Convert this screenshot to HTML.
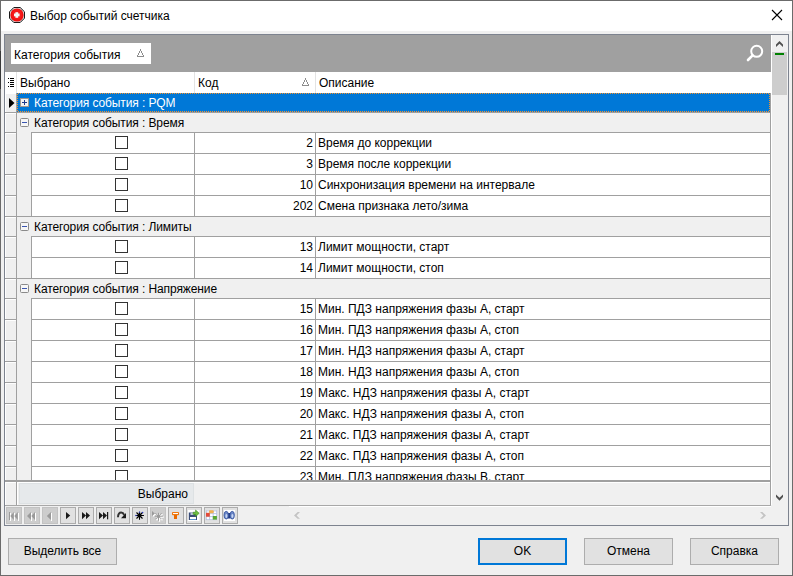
<!DOCTYPE html>
<html><head><meta charset="utf-8"><style>
html,body{margin:0;padding:0;width:793px;height:576px;overflow:hidden;background:#f0f0f0}
.t{position:absolute;font-family:"Liberation Sans", sans-serif;font-size:12px;line-height:14px;white-space:nowrap;color:#000}
</style></head><body>
<div style="position:absolute;left:0px;top:0px;width:793px;height:576px;background:#f0f0f0"></div>
<div style="position:absolute;left:1px;top:1px;width:791px;height:30px;background:#fff"></div>
<div style="position:absolute;left:0px;top:0px;width:793px;height:1px;background:#6b6b6b"></div>
<div style="position:absolute;left:0px;top:575px;width:793px;height:1px;background:#6b6b6b"></div>
<div style="position:absolute;left:0px;top:0px;width:1px;height:576px;background:#6b6b6b"></div>
<div style="position:absolute;left:792px;top:0px;width:1px;height:576px;background:#6b6b6b"></div>
<div style="position:absolute;left:0px;top:51px;width:1px;height:38px;background:#383838"></div>
<svg style="position:absolute;left:9px;top:7px" width="16" height="16" viewBox="0 0 16 16">
<polygon points="4.8,0.5 11.2,0.5 15.5,4.8 15.5,11.2 11.2,15.5 4.8,15.5 0.5,11.2 0.5,4.8" fill="#d8d8d8" stroke="#1a1a1a" stroke-width="1"/>
<circle cx="8" cy="8" r="6.6" fill="#f01010"/>
<circle cx="8" cy="7.6" r="5" fill="#f41a1a"/>
<rect x="5" y="6.5" width="5.6" height="2.8" fill="#f4f8f8"/><rect x="6.4" y="5.2" width="2.8" height="5.6" fill="#f4f8f8"/>
</svg>
<div class="t" style="left:30px;top:9px;">Выбор событий счетчика</div>
<svg style="position:absolute;left:771px;top:9px" width="12" height="12" viewBox="0 0 12 12"><path d="M1 1L11 11M11 1L1 11" stroke="#000" stroke-width="1.1"/></svg>
<div style="position:absolute;left:4px;top:34px;width:785px;height:492px;box-sizing:border-box;border:1px solid #7d838f;background:#f0f0f0"></div>
<div style="position:absolute;left:5px;top:35px;width:766px;height:37px;background:#a0a0a0"></div>
<div style="position:absolute;left:11px;top:43px;width:140px;height:21px;background:#fff"></div>
<div class="t" style="left:14px;top:48px;">Категория события</div>
<svg style="position:absolute;left:137px;top:49px" width="7" height="8" viewBox="0 0 7 8" shape-rendering="crispEdges" fill="#8c8c8c"><rect x="3" y="0" width="1" height="2"/><rect x="2" y="2" width="1" height="2"/><rect x="4" y="2" width="1" height="2"/><rect x="1" y="4" width="1" height="2"/><rect x="5" y="4" width="1" height="2"/><rect x="0" y="6" width="1" height="1"/><rect x="6" y="6" width="1" height="1"/><rect x="0" y="7" width="7" height="1"/></svg>
<svg style="position:absolute;left:740px;top:38px" width="30" height="30" viewBox="0 0 30 30"><circle cx="16.7" cy="13.3" r="5.5" fill="none" stroke="#fff" stroke-width="2"/><path d="M12.6 17.4L8 22" stroke="#fff" stroke-width="2.6" stroke-linecap="round"/></svg>
<div style="position:absolute;left:771px;top:35px;width:1px;height:470px;background:#fff"></div>
<div style="position:absolute;left:772px;top:35px;width:16px;height:470px;background:#f0f0f0"></div>
<svg style="position:absolute;left:772px;top:38px" width="16" height="12" viewBox="0 0 16 12"><polygon points="4,6.6 7.5,2.9 11,6.6 11,9 7.5,5.8 4,9" fill="#505050"/></svg>
<div style="position:absolute;left:772px;top:52px;width:15px;height:43px;background:#cdcdcd"></div>
<div style="position:absolute;left:775px;top:53px;width:9px;height:2px;background:#008000"></div>
<svg style="position:absolute;left:772px;top:492px" width="16" height="12" viewBox="0 0 16 12"><polygon points="4,2.6 7.5,5.8 11,2.6 11,5 7.5,8.8 4,5" fill="#505050"/></svg>
<div style="position:absolute;left:5px;top:72px;width:766px;height:21px;background:#fff"></div>
<div style="position:absolute;left:16px;top:72px;width:1px;height:21px;background:#e3e3e3"></div>
<div style="position:absolute;left:194px;top:72px;width:1px;height:21px;background:#e3e3e3"></div>
<div style="position:absolute;left:315px;top:72px;width:1px;height:21px;background:#e3e3e3"></div>
<svg style="position:absolute;left:7px;top:77px" width="8" height="11" viewBox="0 0 8 11"><rect x="1" y="1" width="1" height="1" fill="#000"/><rect x="3" y="1" width="4" height="1" fill="#000"/><rect x="1" y="5" width="1" height="1" fill="#000"/><rect x="3" y="5" width="4" height="1" fill="#000"/><rect x="1" y="9" width="1" height="1" fill="#000"/><rect x="3" y="9" width="4" height="1" fill="#000"/><rect x="3" y="3" width="4" height="1" fill="#000"/><rect x="3" y="7" width="4" height="1" fill="#000"/></svg>
<div class="t" style="left:20px;top:76px;">Выбрано</div>
<div class="t" style="left:198px;top:76px;">Код</div>
<div class="t" style="left:319px;top:76px;">Описание</div>
<svg style="position:absolute;left:302px;top:78px" width="7" height="8" viewBox="0 0 7 8" shape-rendering="crispEdges" fill="#8c8c8c"><rect x="3" y="0" width="1" height="2"/><rect x="2" y="2" width="1" height="2"/><rect x="4" y="2" width="1" height="2"/><rect x="1" y="4" width="1" height="2"/><rect x="5" y="4" width="1" height="2"/><rect x="0" y="6" width="1" height="1"/><rect x="6" y="6" width="1" height="1"/><rect x="0" y="7" width="7" height="1"/></svg>
<div style="position:absolute;left:5px;top:93px;width:766px;height:387px;overflow:hidden">
<div style="position:absolute;left:0px;top:0px;width:11px;height:19px;background:#f0f0f0;box-shadow:inset 1px 1px 0 #fff"></div>
<div style="position:absolute;left:12px;top:0px;width:753px;height:19px;background:#0078d7"></div>
<div style="position:absolute;left:765px;top:0px;width:1px;height:20px;background:#a0a0a0"></div>
<div style="position:absolute;left:12px;top:0px;width:753px;height:1px;background:repeating-linear-gradient(90deg,transparent 0 1px,#f7922a 1px 2px)"></div>
<div style="position:absolute;left:12px;top:18px;width:753px;height:1px;background:repeating-linear-gradient(90deg,transparent 0 1px,#f7922a 1px 2px)"></div>
<div style="position:absolute;left:12px;top:0px;width:1px;height:19px;background:repeating-linear-gradient(180deg,transparent 0 1px,#f7922a 1px 2px)"></div>
<div style="position:absolute;left:764px;top:0px;width:1px;height:19px;background:repeating-linear-gradient(180deg,transparent 0 1px,#f7922a 1px 2px)"></div>
<svg style="position:absolute;left:4px;top:5px" width="6" height="10" viewBox="0 0 6 10"><path d="M0 0L5.5 5L0 10Z" fill="#000"/></svg>
<svg style="position:absolute;left:15px;top:5px" width="9" height="9" viewBox="0 0 9 9"><rect x="0.5" y="0.5" width="8" height="8" fill="#f4f4f4" stroke="#a09890"/><path d="M2 4.5H7M4.5 2V7" stroke="#1e3c8c" stroke-width="1"/></svg>
<div class="t" style="left:29px;top:3px;color:#fff;letter-spacing:-0.1px">Категория события : PQM</div>
<div style="position:absolute;left:0px;top:19px;width:765px;height:1px;background:#a0a0a0"></div>
<div style="position:absolute;left:11px;top:0px;width:1px;height:20px;background:#a0a0a0"></div>
<div style="position:absolute;left:0px;top:20px;width:11px;height:19px;background:#f0f0f0;box-shadow:inset 1px 1px 0 #fff"></div>
<div style="position:absolute;left:12px;top:20px;width:753px;height:19px;background:#f0f0f0"></div>
<div style="position:absolute;left:765px;top:20px;width:1px;height:20px;background:#a0a0a0"></div>
<svg style="position:absolute;left:15px;top:25px" width="9" height="9" viewBox="0 0 9 9"><rect x="0.5" y="0.5" width="8" height="8" rx="1" fill="#f6f6f6" stroke="#8a8a8a"/><path d="M2 4.5H7" stroke="#3a55b0" stroke-width="1"/></svg>
<div class="t" style="left:29px;top:23px;letter-spacing:-0.1px">Категория события : Время</div>
<div style="position:absolute;left:0px;top:39px;width:11px;height:1px;background:#a0a0a0"></div>
<div style="position:absolute;left:26px;top:39px;width:740px;height:1px;background:#a0a0a0"></div>
<div style="position:absolute;left:12px;top:39px;width:14px;height:1px;background:#f0f0f0"></div>
<div style="position:absolute;left:11px;top:20px;width:1px;height:20px;background:#a0a0a0"></div>
<div style="position:absolute;left:0px;top:40px;width:11px;height:20px;background:#f0f0f0;box-shadow:inset 1px 1px 0 #fff"></div>
<div style="position:absolute;left:11px;top:40px;width:1px;height:20px;background:#a0a0a0"></div>
<div style="position:absolute;left:12px;top:40px;width:14px;height:20px;background:#f0f0f0"></div>
<div style="position:absolute;left:26px;top:40px;width:740px;height:20px;background:#fff"></div>
<div style="position:absolute;left:26px;top:40px;width:1px;height:20px;background:#a0a0a0"></div>
<div style="position:absolute;left:189px;top:40px;width:1px;height:20px;background:#a0a0a0"></div>
<div style="position:absolute;left:310px;top:40px;width:1px;height:20px;background:#a0a0a0"></div>
<div style="position:absolute;left:765px;top:40px;width:1px;height:20px;background:#a0a0a0"></div>
<div style="position:absolute;left:110px;top:43px;width:13px;height:13px;box-sizing:border-box;border:1px solid #333;background:#fff"></div>
<div class="t" style="right:458px;top:43px;">2</div>
<div class="t" style="left:313px;top:43px;">Время до коррекции</div>
<div style="position:absolute;left:0px;top:60px;width:11px;height:1px;background:#a0a0a0"></div>
<div style="position:absolute;left:11px;top:60px;width:1px;height:1px;background:#a0a0a0"></div>
<div style="position:absolute;left:26px;top:60px;width:740px;height:1px;background:#a0a0a0"></div>
<div style="position:absolute;left:0px;top:61px;width:11px;height:20px;background:#f0f0f0;box-shadow:inset 1px 1px 0 #fff"></div>
<div style="position:absolute;left:11px;top:61px;width:1px;height:20px;background:#a0a0a0"></div>
<div style="position:absolute;left:12px;top:61px;width:14px;height:20px;background:#f0f0f0"></div>
<div style="position:absolute;left:26px;top:61px;width:740px;height:20px;background:#fff"></div>
<div style="position:absolute;left:26px;top:61px;width:1px;height:20px;background:#a0a0a0"></div>
<div style="position:absolute;left:189px;top:61px;width:1px;height:20px;background:#a0a0a0"></div>
<div style="position:absolute;left:310px;top:61px;width:1px;height:20px;background:#a0a0a0"></div>
<div style="position:absolute;left:765px;top:61px;width:1px;height:20px;background:#a0a0a0"></div>
<div style="position:absolute;left:110px;top:64px;width:13px;height:13px;box-sizing:border-box;border:1px solid #333;background:#fff"></div>
<div class="t" style="right:458px;top:64px;">3</div>
<div class="t" style="left:313px;top:64px;">Время после коррекции</div>
<div style="position:absolute;left:0px;top:81px;width:11px;height:1px;background:#a0a0a0"></div>
<div style="position:absolute;left:11px;top:81px;width:1px;height:1px;background:#a0a0a0"></div>
<div style="position:absolute;left:26px;top:81px;width:740px;height:1px;background:#a0a0a0"></div>
<div style="position:absolute;left:0px;top:82px;width:11px;height:20px;background:#f0f0f0;box-shadow:inset 1px 1px 0 #fff"></div>
<div style="position:absolute;left:11px;top:82px;width:1px;height:20px;background:#a0a0a0"></div>
<div style="position:absolute;left:12px;top:82px;width:14px;height:20px;background:#f0f0f0"></div>
<div style="position:absolute;left:26px;top:82px;width:740px;height:20px;background:#fff"></div>
<div style="position:absolute;left:26px;top:82px;width:1px;height:20px;background:#a0a0a0"></div>
<div style="position:absolute;left:189px;top:82px;width:1px;height:20px;background:#a0a0a0"></div>
<div style="position:absolute;left:310px;top:82px;width:1px;height:20px;background:#a0a0a0"></div>
<div style="position:absolute;left:765px;top:82px;width:1px;height:20px;background:#a0a0a0"></div>
<div style="position:absolute;left:110px;top:85px;width:13px;height:13px;box-sizing:border-box;border:1px solid #333;background:#fff"></div>
<div class="t" style="right:458px;top:85px;">10</div>
<div class="t" style="left:313px;top:85px;">Синхронизация времени на интервале</div>
<div style="position:absolute;left:0px;top:102px;width:11px;height:1px;background:#a0a0a0"></div>
<div style="position:absolute;left:11px;top:102px;width:1px;height:1px;background:#a0a0a0"></div>
<div style="position:absolute;left:26px;top:102px;width:740px;height:1px;background:#a0a0a0"></div>
<div style="position:absolute;left:0px;top:103px;width:11px;height:20px;background:#f0f0f0;box-shadow:inset 1px 1px 0 #fff"></div>
<div style="position:absolute;left:11px;top:103px;width:1px;height:20px;background:#a0a0a0"></div>
<div style="position:absolute;left:12px;top:103px;width:14px;height:20px;background:#f0f0f0"></div>
<div style="position:absolute;left:26px;top:103px;width:740px;height:20px;background:#fff"></div>
<div style="position:absolute;left:26px;top:103px;width:1px;height:20px;background:#a0a0a0"></div>
<div style="position:absolute;left:189px;top:103px;width:1px;height:20px;background:#a0a0a0"></div>
<div style="position:absolute;left:310px;top:103px;width:1px;height:20px;background:#a0a0a0"></div>
<div style="position:absolute;left:765px;top:103px;width:1px;height:20px;background:#a0a0a0"></div>
<div style="position:absolute;left:110px;top:106px;width:13px;height:13px;box-sizing:border-box;border:1px solid #333;background:#fff"></div>
<div class="t" style="right:458px;top:106px;">202</div>
<div class="t" style="left:313px;top:106px;">Смена признака лето/зима</div>
<div style="position:absolute;left:0px;top:123px;width:766px;height:1px;background:#a0a0a0"></div>
<div style="position:absolute;left:0px;top:124px;width:11px;height:19px;background:#f0f0f0;box-shadow:inset 1px 1px 0 #fff"></div>
<div style="position:absolute;left:12px;top:124px;width:753px;height:19px;background:#f0f0f0"></div>
<div style="position:absolute;left:765px;top:124px;width:1px;height:20px;background:#a0a0a0"></div>
<svg style="position:absolute;left:15px;top:129px" width="9" height="9" viewBox="0 0 9 9"><rect x="0.5" y="0.5" width="8" height="8" rx="1" fill="#f6f6f6" stroke="#8a8a8a"/><path d="M2 4.5H7" stroke="#3a55b0" stroke-width="1"/></svg>
<div class="t" style="left:29px;top:127px;letter-spacing:-0.1px">Категория события : Лимиты</div>
<div style="position:absolute;left:0px;top:143px;width:11px;height:1px;background:#a0a0a0"></div>
<div style="position:absolute;left:26px;top:143px;width:740px;height:1px;background:#a0a0a0"></div>
<div style="position:absolute;left:12px;top:143px;width:14px;height:1px;background:#f0f0f0"></div>
<div style="position:absolute;left:11px;top:124px;width:1px;height:20px;background:#a0a0a0"></div>
<div style="position:absolute;left:0px;top:144px;width:11px;height:20px;background:#f0f0f0;box-shadow:inset 1px 1px 0 #fff"></div>
<div style="position:absolute;left:11px;top:144px;width:1px;height:20px;background:#a0a0a0"></div>
<div style="position:absolute;left:12px;top:144px;width:14px;height:20px;background:#f0f0f0"></div>
<div style="position:absolute;left:26px;top:144px;width:740px;height:20px;background:#fff"></div>
<div style="position:absolute;left:26px;top:144px;width:1px;height:20px;background:#a0a0a0"></div>
<div style="position:absolute;left:189px;top:144px;width:1px;height:20px;background:#a0a0a0"></div>
<div style="position:absolute;left:310px;top:144px;width:1px;height:20px;background:#a0a0a0"></div>
<div style="position:absolute;left:765px;top:144px;width:1px;height:20px;background:#a0a0a0"></div>
<div style="position:absolute;left:110px;top:147px;width:13px;height:13px;box-sizing:border-box;border:1px solid #333;background:#fff"></div>
<div class="t" style="right:458px;top:147px;">13</div>
<div class="t" style="left:313px;top:147px;">Лимит мощности, старт</div>
<div style="position:absolute;left:0px;top:164px;width:11px;height:1px;background:#a0a0a0"></div>
<div style="position:absolute;left:11px;top:164px;width:1px;height:1px;background:#a0a0a0"></div>
<div style="position:absolute;left:26px;top:164px;width:740px;height:1px;background:#a0a0a0"></div>
<div style="position:absolute;left:0px;top:165px;width:11px;height:20px;background:#f0f0f0;box-shadow:inset 1px 1px 0 #fff"></div>
<div style="position:absolute;left:11px;top:165px;width:1px;height:20px;background:#a0a0a0"></div>
<div style="position:absolute;left:12px;top:165px;width:14px;height:20px;background:#f0f0f0"></div>
<div style="position:absolute;left:26px;top:165px;width:740px;height:20px;background:#fff"></div>
<div style="position:absolute;left:26px;top:165px;width:1px;height:20px;background:#a0a0a0"></div>
<div style="position:absolute;left:189px;top:165px;width:1px;height:20px;background:#a0a0a0"></div>
<div style="position:absolute;left:310px;top:165px;width:1px;height:20px;background:#a0a0a0"></div>
<div style="position:absolute;left:765px;top:165px;width:1px;height:20px;background:#a0a0a0"></div>
<div style="position:absolute;left:110px;top:168px;width:13px;height:13px;box-sizing:border-box;border:1px solid #333;background:#fff"></div>
<div class="t" style="right:458px;top:168px;">14</div>
<div class="t" style="left:313px;top:168px;">Лимит мощности, стоп</div>
<div style="position:absolute;left:0px;top:185px;width:766px;height:1px;background:#a0a0a0"></div>
<div style="position:absolute;left:0px;top:186px;width:11px;height:19px;background:#f0f0f0;box-shadow:inset 1px 1px 0 #fff"></div>
<div style="position:absolute;left:12px;top:186px;width:753px;height:19px;background:#f0f0f0"></div>
<div style="position:absolute;left:765px;top:186px;width:1px;height:20px;background:#a0a0a0"></div>
<svg style="position:absolute;left:15px;top:191px" width="9" height="9" viewBox="0 0 9 9"><rect x="0.5" y="0.5" width="8" height="8" rx="1" fill="#f6f6f6" stroke="#8a8a8a"/><path d="M2 4.5H7" stroke="#3a55b0" stroke-width="1"/></svg>
<div class="t" style="left:29px;top:189px;letter-spacing:-0.1px">Категория события : Напряжение</div>
<div style="position:absolute;left:0px;top:205px;width:11px;height:1px;background:#a0a0a0"></div>
<div style="position:absolute;left:26px;top:205px;width:740px;height:1px;background:#a0a0a0"></div>
<div style="position:absolute;left:12px;top:205px;width:14px;height:1px;background:#f0f0f0"></div>
<div style="position:absolute;left:11px;top:186px;width:1px;height:20px;background:#a0a0a0"></div>
<div style="position:absolute;left:0px;top:206px;width:11px;height:20px;background:#f0f0f0;box-shadow:inset 1px 1px 0 #fff"></div>
<div style="position:absolute;left:11px;top:206px;width:1px;height:20px;background:#a0a0a0"></div>
<div style="position:absolute;left:12px;top:206px;width:14px;height:20px;background:#f0f0f0"></div>
<div style="position:absolute;left:26px;top:206px;width:740px;height:20px;background:#fff"></div>
<div style="position:absolute;left:26px;top:206px;width:1px;height:20px;background:#a0a0a0"></div>
<div style="position:absolute;left:189px;top:206px;width:1px;height:20px;background:#a0a0a0"></div>
<div style="position:absolute;left:310px;top:206px;width:1px;height:20px;background:#a0a0a0"></div>
<div style="position:absolute;left:765px;top:206px;width:1px;height:20px;background:#a0a0a0"></div>
<div style="position:absolute;left:110px;top:209px;width:13px;height:13px;box-sizing:border-box;border:1px solid #333;background:#fff"></div>
<div class="t" style="right:458px;top:209px;">15</div>
<div class="t" style="left:313px;top:209px;">Мин. ПДЗ напряжения фазы А, старт</div>
<div style="position:absolute;left:0px;top:226px;width:11px;height:1px;background:#a0a0a0"></div>
<div style="position:absolute;left:11px;top:226px;width:1px;height:1px;background:#a0a0a0"></div>
<div style="position:absolute;left:26px;top:226px;width:740px;height:1px;background:#a0a0a0"></div>
<div style="position:absolute;left:0px;top:227px;width:11px;height:20px;background:#f0f0f0;box-shadow:inset 1px 1px 0 #fff"></div>
<div style="position:absolute;left:11px;top:227px;width:1px;height:20px;background:#a0a0a0"></div>
<div style="position:absolute;left:12px;top:227px;width:14px;height:20px;background:#f0f0f0"></div>
<div style="position:absolute;left:26px;top:227px;width:740px;height:20px;background:#fff"></div>
<div style="position:absolute;left:26px;top:227px;width:1px;height:20px;background:#a0a0a0"></div>
<div style="position:absolute;left:189px;top:227px;width:1px;height:20px;background:#a0a0a0"></div>
<div style="position:absolute;left:310px;top:227px;width:1px;height:20px;background:#a0a0a0"></div>
<div style="position:absolute;left:765px;top:227px;width:1px;height:20px;background:#a0a0a0"></div>
<div style="position:absolute;left:110px;top:230px;width:13px;height:13px;box-sizing:border-box;border:1px solid #333;background:#fff"></div>
<div class="t" style="right:458px;top:230px;">16</div>
<div class="t" style="left:313px;top:230px;">Мин. ПДЗ напряжения фазы А, стоп</div>
<div style="position:absolute;left:0px;top:247px;width:11px;height:1px;background:#a0a0a0"></div>
<div style="position:absolute;left:11px;top:247px;width:1px;height:1px;background:#a0a0a0"></div>
<div style="position:absolute;left:26px;top:247px;width:740px;height:1px;background:#a0a0a0"></div>
<div style="position:absolute;left:0px;top:248px;width:11px;height:20px;background:#f0f0f0;box-shadow:inset 1px 1px 0 #fff"></div>
<div style="position:absolute;left:11px;top:248px;width:1px;height:20px;background:#a0a0a0"></div>
<div style="position:absolute;left:12px;top:248px;width:14px;height:20px;background:#f0f0f0"></div>
<div style="position:absolute;left:26px;top:248px;width:740px;height:20px;background:#fff"></div>
<div style="position:absolute;left:26px;top:248px;width:1px;height:20px;background:#a0a0a0"></div>
<div style="position:absolute;left:189px;top:248px;width:1px;height:20px;background:#a0a0a0"></div>
<div style="position:absolute;left:310px;top:248px;width:1px;height:20px;background:#a0a0a0"></div>
<div style="position:absolute;left:765px;top:248px;width:1px;height:20px;background:#a0a0a0"></div>
<div style="position:absolute;left:110px;top:251px;width:13px;height:13px;box-sizing:border-box;border:1px solid #333;background:#fff"></div>
<div class="t" style="right:458px;top:251px;">17</div>
<div class="t" style="left:313px;top:251px;">Мин. НДЗ напряжения фазы А, старт</div>
<div style="position:absolute;left:0px;top:268px;width:11px;height:1px;background:#a0a0a0"></div>
<div style="position:absolute;left:11px;top:268px;width:1px;height:1px;background:#a0a0a0"></div>
<div style="position:absolute;left:26px;top:268px;width:740px;height:1px;background:#a0a0a0"></div>
<div style="position:absolute;left:0px;top:269px;width:11px;height:20px;background:#f0f0f0;box-shadow:inset 1px 1px 0 #fff"></div>
<div style="position:absolute;left:11px;top:269px;width:1px;height:20px;background:#a0a0a0"></div>
<div style="position:absolute;left:12px;top:269px;width:14px;height:20px;background:#f0f0f0"></div>
<div style="position:absolute;left:26px;top:269px;width:740px;height:20px;background:#fff"></div>
<div style="position:absolute;left:26px;top:269px;width:1px;height:20px;background:#a0a0a0"></div>
<div style="position:absolute;left:189px;top:269px;width:1px;height:20px;background:#a0a0a0"></div>
<div style="position:absolute;left:310px;top:269px;width:1px;height:20px;background:#a0a0a0"></div>
<div style="position:absolute;left:765px;top:269px;width:1px;height:20px;background:#a0a0a0"></div>
<div style="position:absolute;left:110px;top:272px;width:13px;height:13px;box-sizing:border-box;border:1px solid #333;background:#fff"></div>
<div class="t" style="right:458px;top:272px;">18</div>
<div class="t" style="left:313px;top:272px;">Мин. НДЗ напряжения фазы А, стоп</div>
<div style="position:absolute;left:0px;top:289px;width:11px;height:1px;background:#a0a0a0"></div>
<div style="position:absolute;left:11px;top:289px;width:1px;height:1px;background:#a0a0a0"></div>
<div style="position:absolute;left:26px;top:289px;width:740px;height:1px;background:#a0a0a0"></div>
<div style="position:absolute;left:0px;top:290px;width:11px;height:20px;background:#f0f0f0;box-shadow:inset 1px 1px 0 #fff"></div>
<div style="position:absolute;left:11px;top:290px;width:1px;height:20px;background:#a0a0a0"></div>
<div style="position:absolute;left:12px;top:290px;width:14px;height:20px;background:#f0f0f0"></div>
<div style="position:absolute;left:26px;top:290px;width:740px;height:20px;background:#fff"></div>
<div style="position:absolute;left:26px;top:290px;width:1px;height:20px;background:#a0a0a0"></div>
<div style="position:absolute;left:189px;top:290px;width:1px;height:20px;background:#a0a0a0"></div>
<div style="position:absolute;left:310px;top:290px;width:1px;height:20px;background:#a0a0a0"></div>
<div style="position:absolute;left:765px;top:290px;width:1px;height:20px;background:#a0a0a0"></div>
<div style="position:absolute;left:110px;top:293px;width:13px;height:13px;box-sizing:border-box;border:1px solid #333;background:#fff"></div>
<div class="t" style="right:458px;top:293px;">19</div>
<div class="t" style="left:313px;top:293px;">Макс. НДЗ напряжения фазы А, старт</div>
<div style="position:absolute;left:0px;top:310px;width:11px;height:1px;background:#a0a0a0"></div>
<div style="position:absolute;left:11px;top:310px;width:1px;height:1px;background:#a0a0a0"></div>
<div style="position:absolute;left:26px;top:310px;width:740px;height:1px;background:#a0a0a0"></div>
<div style="position:absolute;left:0px;top:311px;width:11px;height:20px;background:#f0f0f0;box-shadow:inset 1px 1px 0 #fff"></div>
<div style="position:absolute;left:11px;top:311px;width:1px;height:20px;background:#a0a0a0"></div>
<div style="position:absolute;left:12px;top:311px;width:14px;height:20px;background:#f0f0f0"></div>
<div style="position:absolute;left:26px;top:311px;width:740px;height:20px;background:#fff"></div>
<div style="position:absolute;left:26px;top:311px;width:1px;height:20px;background:#a0a0a0"></div>
<div style="position:absolute;left:189px;top:311px;width:1px;height:20px;background:#a0a0a0"></div>
<div style="position:absolute;left:310px;top:311px;width:1px;height:20px;background:#a0a0a0"></div>
<div style="position:absolute;left:765px;top:311px;width:1px;height:20px;background:#a0a0a0"></div>
<div style="position:absolute;left:110px;top:314px;width:13px;height:13px;box-sizing:border-box;border:1px solid #333;background:#fff"></div>
<div class="t" style="right:458px;top:314px;">20</div>
<div class="t" style="left:313px;top:314px;">Макс. НДЗ напряжения фазы А, стоп</div>
<div style="position:absolute;left:0px;top:331px;width:11px;height:1px;background:#a0a0a0"></div>
<div style="position:absolute;left:11px;top:331px;width:1px;height:1px;background:#a0a0a0"></div>
<div style="position:absolute;left:26px;top:331px;width:740px;height:1px;background:#a0a0a0"></div>
<div style="position:absolute;left:0px;top:332px;width:11px;height:20px;background:#f0f0f0;box-shadow:inset 1px 1px 0 #fff"></div>
<div style="position:absolute;left:11px;top:332px;width:1px;height:20px;background:#a0a0a0"></div>
<div style="position:absolute;left:12px;top:332px;width:14px;height:20px;background:#f0f0f0"></div>
<div style="position:absolute;left:26px;top:332px;width:740px;height:20px;background:#fff"></div>
<div style="position:absolute;left:26px;top:332px;width:1px;height:20px;background:#a0a0a0"></div>
<div style="position:absolute;left:189px;top:332px;width:1px;height:20px;background:#a0a0a0"></div>
<div style="position:absolute;left:310px;top:332px;width:1px;height:20px;background:#a0a0a0"></div>
<div style="position:absolute;left:765px;top:332px;width:1px;height:20px;background:#a0a0a0"></div>
<div style="position:absolute;left:110px;top:335px;width:13px;height:13px;box-sizing:border-box;border:1px solid #333;background:#fff"></div>
<div class="t" style="right:458px;top:335px;">21</div>
<div class="t" style="left:313px;top:335px;">Макс. ПДЗ напряжения фазы А, старт</div>
<div style="position:absolute;left:0px;top:352px;width:11px;height:1px;background:#a0a0a0"></div>
<div style="position:absolute;left:11px;top:352px;width:1px;height:1px;background:#a0a0a0"></div>
<div style="position:absolute;left:26px;top:352px;width:740px;height:1px;background:#a0a0a0"></div>
<div style="position:absolute;left:0px;top:353px;width:11px;height:20px;background:#f0f0f0;box-shadow:inset 1px 1px 0 #fff"></div>
<div style="position:absolute;left:11px;top:353px;width:1px;height:20px;background:#a0a0a0"></div>
<div style="position:absolute;left:12px;top:353px;width:14px;height:20px;background:#f0f0f0"></div>
<div style="position:absolute;left:26px;top:353px;width:740px;height:20px;background:#fff"></div>
<div style="position:absolute;left:26px;top:353px;width:1px;height:20px;background:#a0a0a0"></div>
<div style="position:absolute;left:189px;top:353px;width:1px;height:20px;background:#a0a0a0"></div>
<div style="position:absolute;left:310px;top:353px;width:1px;height:20px;background:#a0a0a0"></div>
<div style="position:absolute;left:765px;top:353px;width:1px;height:20px;background:#a0a0a0"></div>
<div style="position:absolute;left:110px;top:356px;width:13px;height:13px;box-sizing:border-box;border:1px solid #333;background:#fff"></div>
<div class="t" style="right:458px;top:356px;">22</div>
<div class="t" style="left:313px;top:356px;">Макс. ПДЗ напряжения фазы А, стоп</div>
<div style="position:absolute;left:0px;top:373px;width:11px;height:1px;background:#a0a0a0"></div>
<div style="position:absolute;left:11px;top:373px;width:1px;height:1px;background:#a0a0a0"></div>
<div style="position:absolute;left:26px;top:373px;width:740px;height:1px;background:#a0a0a0"></div>
<div style="position:absolute;left:0px;top:374px;width:11px;height:20px;background:#f0f0f0;box-shadow:inset 1px 1px 0 #fff"></div>
<div style="position:absolute;left:11px;top:374px;width:1px;height:20px;background:#a0a0a0"></div>
<div style="position:absolute;left:12px;top:374px;width:14px;height:20px;background:#f0f0f0"></div>
<div style="position:absolute;left:26px;top:374px;width:740px;height:20px;background:#fff"></div>
<div style="position:absolute;left:26px;top:374px;width:1px;height:20px;background:#a0a0a0"></div>
<div style="position:absolute;left:189px;top:374px;width:1px;height:20px;background:#a0a0a0"></div>
<div style="position:absolute;left:310px;top:374px;width:1px;height:20px;background:#a0a0a0"></div>
<div style="position:absolute;left:765px;top:374px;width:1px;height:20px;background:#a0a0a0"></div>
<div style="position:absolute;left:110px;top:377px;width:13px;height:13px;box-sizing:border-box;border:1px solid #333;background:#fff"></div>
<div class="t" style="right:458px;top:377px;">23</div>
<div class="t" style="left:313px;top:377px;">Мин. ПДЗ напряжения фазы В, старт</div>
<div style="position:absolute;left:0px;top:394px;width:766px;height:1px;background:#a0a0a0"></div>
</div>
<div style="position:absolute;left:5px;top:480px;width:766px;height:2px;background:#a0a0a0"></div>
<div style="position:absolute;left:5px;top:482px;width:11px;height:23px;background:#f0f0f0;box-shadow:inset 1px 1px 0 #fff"></div>
<div style="position:absolute;left:16px;top:482px;width:1px;height:23px;background:#a0a0a0"></div>
<div style="position:absolute;left:17px;top:482px;width:754px;height:23px;background:#f0f0f0;box-shadow:inset 1px 1px 0 #fff"></div>
<div style="position:absolute;left:19px;top:483px;width:175px;height:21px;box-sizing:border-box;border:1px solid #dde1e3;background:#e6e9eb"></div>
<div class="t" style="right:605px;top:487px;">Выбрано</div>
<div style="position:absolute;left:770px;top:482px;width:1px;height:23px;background:#a0a0a0"></div>
<div style="position:absolute;left:5px;top:505px;width:766px;height:1px;background:#a8a8a8"></div>
<div style="position:absolute;left:5px;top:506px;width:283px;height:19px;background:#f0f0f0"></div>
<div style="position:absolute;left:289px;top:506px;width:482px;height:1px;background:#fff"></div>
<svg style="position:absolute;left:292px;top:510px" width="10" height="10" viewBox="0 0 10 10"><polygon points="8,2 4.6,5.4 8,8.8 5.6,8.8 2,5.4 5.6,2" fill="#c4c4c4"/></svg>
<svg style="position:absolute;left:758px;top:510px" width="10" height="10" viewBox="0 0 10 10"><polygon points="2,2 5.4,5.4 2,8.8 4.4,8.8 8,5.4 4.4,2" fill="#c4c4c4"/></svg>
<div style="position:absolute;left:6px;top:507px;width:16px;height:17px;box-sizing:border-box;border:1px solid #c2c2c2;background:#cdcdcd"></div>
<svg style="position:absolute;left:6px;top:507px" width="16" height="17" viewBox="0 0 16 17"><rect x="4" y="6" width="1" height="8" fill="#fff"/><rect x="8" y="6" width="1" height="8" fill="#fff"/><rect x="12" y="6" width="1" height="8" fill="#fff"/><rect x="3" y="5" width="1" height="8" fill="#9a9a9a"/><path d="M4.3 9L7.8 5V13Z M8.3 9L11.8 5V13Z" fill="#9a9a9a"/></svg>
<div style="position:absolute;left:24px;top:507px;width:16px;height:17px;box-sizing:border-box;border:1px solid #c2c2c2;background:#cdcdcd"></div>
<svg style="position:absolute;left:24px;top:507px" width="16" height="17" viewBox="0 0 16 17"><rect x="7" y="6" width="1" height="8" fill="#fff"/><rect x="11" y="6" width="1" height="8" fill="#fff"/><path d="M3 9L7 5V13Z M7.3 9L11 5V13Z" fill="#9a9a9a"/></svg>
<div style="position:absolute;left:42px;top:507px;width:16px;height:17px;box-sizing:border-box;border:1px solid #c2c2c2;background:#cdcdcd"></div>
<svg style="position:absolute;left:42px;top:507px" width="16" height="17" viewBox="0 0 16 17"><rect x="9" y="6" width="1" height="8" fill="#fff"/><path d="M4.8 9L9 5V13Z" fill="#9a9a9a"/></svg>
<div style="position:absolute;left:60px;top:507px;width:16px;height:17px;box-sizing:border-box;border:1px solid #acacac;background:#e1e1e1"></div>
<svg style="position:absolute;left:60px;top:507px" width="16" height="17" viewBox="0 0 16 17"><path d="M6 5L10.2 8.6L6 12.3Z" fill="#1a1a1a"/></svg>
<div style="position:absolute;left:78px;top:507px;width:16px;height:17px;box-sizing:border-box;border:1px solid #acacac;background:#e1e1e1"></div>
<svg style="position:absolute;left:78px;top:507px" width="16" height="17" viewBox="0 0 16 17"><path d="M4 5L8 8.6L4 12.3Z M8 5L12 8.6L8 12.3Z" fill="#1a1a1a"/></svg>
<div style="position:absolute;left:96px;top:507px;width:16px;height:17px;box-sizing:border-box;border:1px solid #acacac;background:#e1e1e1"></div>
<svg style="position:absolute;left:96px;top:507px" width="16" height="17" viewBox="0 0 16 17"><path d="M3 5L7 8.6L3 12.3Z M7 5L11 8.6L7 12.3Z" fill="#1a1a1a"/><rect x="11" y="5" width="1.2" height="7.3" fill="#1a1a1a"/></svg>
<div style="position:absolute;left:114px;top:507px;width:16px;height:17px;box-sizing:border-box;border:1px solid #acacac;background:#e1e1e1"></div>
<svg style="position:absolute;left:114px;top:507px" width="16" height="17" viewBox="0 0 16 17"><path d="M4 10.2C4 6.8 5.5 5.6 7.2 5.6C8.8 5.6 9.6 6.6 10.2 8" fill="none" stroke="#333" stroke-width="2"/><path d="M7 11.2L12 11.2L12 6Z" fill="#1a1a1a"/></svg>
<div style="position:absolute;left:132px;top:507px;width:16px;height:17px;box-sizing:border-box;border:1px solid #acacac;background:#e1e1e1"></div>
<svg style="position:absolute;left:132px;top:507px" width="16" height="17" viewBox="0 0 16 17"><path d="M7.5 4.7V12.7M3.7 8.5H11.9M4.5 5.5L10.5 11.5M10.5 5.5L4.5 11.5" stroke="#000" stroke-width="1.1"/><circle cx="7.5" cy="8.5" r="2" fill="#000"/><circle cx="7.5" cy="5.3" r="0.75" fill="#2838c0"/><circle cx="10.6" cy="5.4" r="0.75" fill="#2838c0"/><circle cx="4" cy="8.5" r="0.75" fill="#2838c0"/></svg>
<div style="position:absolute;left:150px;top:507px;width:16px;height:17px;box-sizing:border-box;border:1px solid #c2c2c2;background:#cdcdcd"></div>
<svg style="position:absolute;left:150px;top:507px" width="16" height="17" viewBox="0 0 16 17"><path d="M3 5L6 7.5L3 10Z" fill="#fff"/><path d="M2 4L5 6.5L2 9Z" fill="#999"/><path d="M9.5 6.8V14.7M5.9 10.2H13.8M6.5 7.2L12.5 13.2M12.5 7.2L6.5 13.2" stroke="#fff" stroke-width="1.3"/><path d="M8.5 5.8V13.7M4.9 9.2H12.8M5.5 6.2L11.5 12.2M11.5 6.2L5.5 12.2" stroke="#9a9a9a" stroke-width="1"/><circle cx="8.5" cy="9.2" r="1.6" fill="#9a9a9a"/></svg>
<div style="position:absolute;left:168px;top:507px;width:16px;height:17px;box-sizing:border-box;border:1px solid #acacac;background:#e1e1e1"></div>
<svg style="position:absolute;left:168px;top:507px" width="16" height="17" viewBox="0 0 16 17"><rect x="4" y="5" width="7" height="3.2" rx="0.8" fill="#f07a10"/><rect x="5" y="6" width="5" height="1" fill="#fff"/><rect x="6" y="8" width="3" height="4" fill="#e86a00"/></svg>
<div style="position:absolute;left:186px;top:507px;width:16px;height:17px;box-sizing:border-box;border:1px solid #acacac;background:#e1e1e1"></div>
<svg style="position:absolute;left:186px;top:507px" width="16" height="17" viewBox="0 0 16 17"><rect x="2" y="3" width="11.5" height="11" fill="#fff"/><rect x="2.8" y="5.5" width="8.2" height="7.5" fill="#3a4c78"/><rect x="4.5" y="5.5" width="3.5" height="2.5" fill="#b8c4d8"/><rect x="4" y="10" width="6" height="2.6" fill="#fff"/><rect x="4" y="12" width="6" height="0.8" fill="#4a90d0"/><path d="M7.2 5.2H9.6V3L13.2 6.3L9.6 9.6V7.4H7.2Z" fill="#70c040" stroke="#3c8a20" stroke-width="0.6"/></svg>
<div style="position:absolute;left:204px;top:507px;width:16px;height:17px;box-sizing:border-box;border:1px solid #acacac;background:#e1e1e1"></div>
<svg style="position:absolute;left:204px;top:507px" width="16" height="17" viewBox="0 0 16 17"><rect x="2" y="3.5" width="11" height="9.5" fill="#fff"/><path d="M2.4 3.5V13M5.6 3.5V13M9.2 3.5V13M12.6 3.5V13M2 3.9H13M2 6.6H13M2 9.6H13M2 12.6H13" stroke="#b0bce0" stroke-width="0.8"/><rect x="2" y="5.8" width="3.8" height="3.9" fill="#e24a3a"/><rect x="5" y="3.2" width="4.7" height="3.1" rx="1" fill="#f0b050"/><rect x="8.8" y="9" width="4.1" height="3.6" fill="#58a830"/></svg>
<div style="position:absolute;left:222px;top:507px;width:16px;height:17px;box-sizing:border-box;border:1px solid #acacac;background:#e1e1e1"></div>
<svg style="position:absolute;left:222px;top:507px" width="16" height="17" viewBox="0 0 16 17"><rect x="2" y="3" width="11" height="11" fill="#fff"/><rect x="5.8" y="6" width="2.6" height="5.5" fill="#203880"/><ellipse cx="4.2" cy="8.2" rx="2.2" ry="3.9" fill="#6c88c8" stroke="#34509a" stroke-width="0.8"/><ellipse cx="10.2" cy="8.2" rx="2.2" ry="3.9" fill="#6c88c8" stroke="#34509a" stroke-width="0.8"/><ellipse cx="4.4" cy="9" rx="1" ry="2" fill="#c8d8f4"/><ellipse cx="10.4" cy="9" rx="1" ry="2" fill="#c8d8f4"/></svg>
<div style="position:absolute;left:8px;top:538px;width:109px;height:27px;box-sizing:border-box;border:1px solid #adadad;background:#e1e1e1"></div>
<div class="t" style="left:8px;top:544px;width:109px;text-align:center">Выделить все</div>
<div style="position:absolute;left:478px;top:538px;width:89px;height:27px;box-sizing:border-box;border:2px solid #0078d7;background:#e1e1e1"></div>
<div class="t" style="left:478px;top:544px;width:89px;text-align:center">OK</div>
<div style="position:absolute;left:584px;top:538px;width:89px;height:27px;box-sizing:border-box;border:1px solid #adadad;background:#e1e1e1"></div>
<div class="t" style="left:584px;top:544px;width:89px;text-align:center">Отмена</div>
<div style="position:absolute;left:690px;top:538px;width:89px;height:27px;box-sizing:border-box;border:1px solid #adadad;background:#e1e1e1"></div>
<div class="t" style="left:690px;top:544px;width:89px;text-align:center">Справка</div>
</body></html>
